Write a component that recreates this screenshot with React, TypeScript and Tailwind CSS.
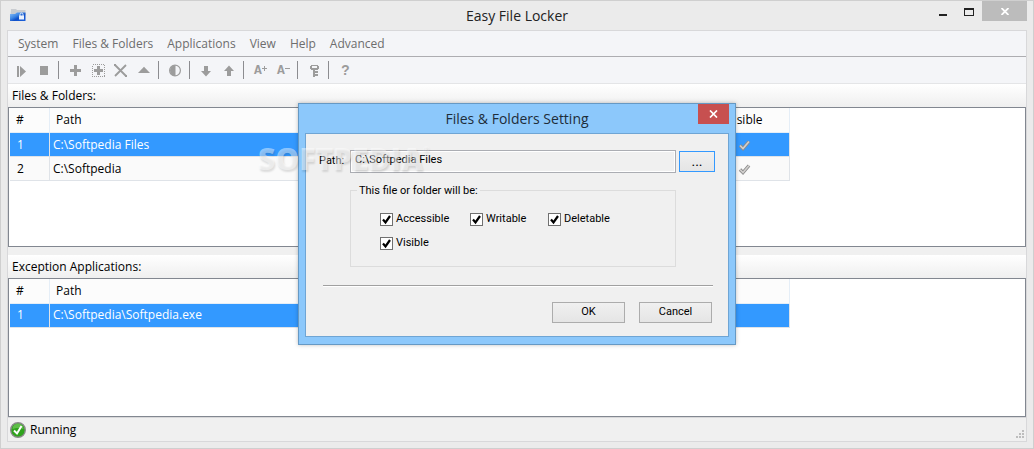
import type { ReactNode } from "react";

const MENUS = ["System", "Files & Folders", "Applications", "View", "Help", "Advanced"];

function FolderIcon() {
  return (
    <svg width="16" height="13" viewBox="0 0 16 13" aria-hidden="true">
      <defs>
        <linearGradient id="folder" x1="0" y1="0" x2="1" y2="1">
          <stop offset="0" stopColor="#8fc2f8" />
          <stop offset="0.4" stopColor="#3d86e4" />
          <stop offset="0.6" stopColor="#0f4fc8" />
          <stop offset="1" stopColor="#1c62dc" />
        </linearGradient>
      </defs>
      <path d="M1 0h5l1 1h8.500v5H.5z" fill="#c9ccd0" />
      <path d="M0 5h5l2-1.500h8.500v8.500H0z" fill="url(#folder)" />
      <path d="M10 7V5.500a1.500 1.500 0 0 1 3 0V7" fill="none" stroke="#dfeafc" />
      <rect x="9" y="6.500" width="5" height="4" fill="#eaf1fd" />
    </svg>
  );
}

function ToolButton({ label, children }: { label: string; children: ReactNode }) {
  return (
    <button type="button" aria-label={label} className="flex h-[26px] w-[23px] items-center justify-center text-[#9c9c9c]">
      {children}
    </button>
  );
}

function Glyph({ children, smooth = false }: { children: ReactNode; smooth?: boolean }) {
  return (
    <svg width="23" height="26" viewBox="0 0 23 26" fill="currentColor" shapeRendering={smooth ? "auto" : "crispEdges"} aria-hidden="true">
      {children}
    </svg>
  );
}

function Separator() {
  return <div className="ml-[2px] mr-[5px] h-[18px] w-px bg-[#8c8c90]" />;
}

function Toolbar() {
  return (
    <div className="flex h-[27px] items-center border-b border-[#e4e5e7] bg-[#f4f5f8] pl-[2px]">
      <ToolButton label="Start">
        <Glyph smooth>
          <path d="M7 9h2v11H7zM10 9l6 5.500-6 5.500z" />
        </Glyph>
      </ToolButton>
      <ToolButton label="Stop">
        <Glyph>
          <path d="M7 9h8v9H7z" />
        </Glyph>
      </ToolButton>
      <Separator />
      <ToolButton label="Add">
        <Glyph>
          <path d="M6 12h11v3H6zM10 8h3v11h-3z" />
        </Glyph>
      </ToolButton>
      <ToolButton label="Add several">
        <Glyph>
          <path d="M7 12h9v3H7zM10 9h3v9h-3z" />
          <rect x="5.500" y="7.500" width="12" height="12" fill="none" stroke="currentColor" strokeDasharray="1 1" />
        </Glyph>
      </ToolButton>
      <ToolButton label="Remove">
        <Glyph smooth>
          <path d="M5 8l11 11M16 8L5 19" stroke="currentColor" strokeWidth="1.800" />
          <path d="M4 7h2v2H4zM15 18h2v2h-2z" />
        </Glyph>
      </ToolButton>
      <ToolButton label="Edit">
        <Glyph smooth>
          <path d="M5 16l6-6.200 6 6.200z" />
        </Glyph>
      </ToolButton>
      <Separator />
      <ToolButton label="Toggle">
        <Glyph smooth>
          <circle cx="11" cy="13.500" r="5.400" fill="none" stroke="currentColor" strokeWidth="1.200" />
          <path d="M11.500 8v11a5.500 5.500 0 0 1 0-11z" />
        </Glyph>
      </ToolButton>
      <Separator />
      <ToolButton label="Move down">
        <Glyph smooth>
          <path d="M9 9h4v5h3l-5 5.500L6 14h3z" />
        </Glyph>
      </ToolButton>
      <ToolButton label="Move up">
        <Glyph smooth>
          <path d="M9 19h4v-5h3l-5-5.500L6 14h3z" />
        </Glyph>
      </ToolButton>
      <Separator />
      <ToolButton label="Larger text">
        <span className="pt-[2px] font-['Liberation_Mono',monospace] text-[13px] leading-3 font-bold">A</span>
        <svg width="5" height="5" viewBox="0 0 5 5" className="mb-1" fill="currentColor" aria-hidden="true">
          <path d="M2 0h1v2h2v1H3v2H2V3H0V2h2z" />
        </svg>
      </ToolButton>
      <ToolButton label="Smaller text">
        <span className="pt-[2px] font-['Liberation_Mono',monospace] text-[13px] leading-3 font-bold">A</span>
        <svg width="5" height="5" viewBox="0 0 5 5" className="mb-1" fill="currentColor" aria-hidden="true">
          <path d="M0 2h5v1H0z" />
        </svg>
      </ToolButton>
      <Separator />
      <ToolButton label="Password">
        <Glyph>
          <path fillRule="evenodd" d="M8 8h7v1h1v3h-1v1H8v-1H7V9h1zM9 9v2h5V9z" />
          <path d="M10 12h2v8h-2zM12 14h3v2h-3zM12 17h3v2h-3z" />
        </Glyph>
      </ToolButton>
      <Separator />
      <ToolButton label="Help">
        <span className="pt-px font-['Liberation_Mono',monospace] text-sm leading-4 font-bold">?</span>
      </ToolButton>
    </div>
  );
}

function RowTick() {
  return (
    <svg width="13" height="12" viewBox="0 0 13 12" className="mx-auto" role="img" aria-label="Yes">
      <path d="M2 6.500l3 3L11 2.500" fill="none" stroke="#8b8b8b" strokeWidth="3.400" />
      <path d="M2 6.500l3 3L11 2.500" fill="none" stroke="#d2d0ce" strokeWidth="1.600" />
    </svg>
  );
}

type Row = { path: string; visible?: boolean; selected?: boolean };

function FileList({ title, rows, lastHeading }: { title: string; rows: Row[]; lastHeading: string }) {
  return (
    <section className="flex grow basis-0 flex-col">
      <h2 className="h-[23px] bg-linear-to-b from-white to-[#efefef] pl-1 text-xs leading-[23px]">{title}</h2>
      <div className="flex-1 border border-[#828790] bg-white pr-[235px] pl-px">
        <table className="w-full table-fixed border-separate border-spacing-0 text-left text-xs">
          <colgroup>
            <col className="w-[40px]" />
            <col />
            <col className="w-[90px]" />
          </colgroup>
          <thead>
            <tr className="h-[25px] bg-[#fcfcfc]">
              <th className="border-r border-b border-[#e5eef7] pl-[6px] font-normal">#</th>
              <th className="border-b border-[#e5eef7] pl-[6px] font-normal">Path</th>
              <th className="border-r border-b border-[#e5eef7] text-center font-normal">{lastHeading}</th>
            </tr>
          </thead>
          <tbody>
            {rows.map((row, i) => (
              <tr key={row.path} className={row.selected ? "h-6 bg-[#3399ff] text-white" : "h-6 bg-[#fafafa]"}>
                <td className="border-r border-b border-[#dfe3e8] pl-[7px]">{i + 1}</td>
                <td className="border-b border-[#dfe3e8] pl-[3px]">{row.path}</td>
                <td className="border-r border-b border-[#dfe3e8]">{row.visible && <RowTick />}</td>
              </tr>
            ))}
          </tbody>
        </table>
      </div>
    </section>
  );
}

function Check({ label }: { label: string }) {
  return (
    <label className="flex h-[13px] items-center gap-[3px]">
      <span className="grid">
        <input type="checkbox" defaultChecked className="peer col-start-1 row-start-1 size-[13px] appearance-none border border-[#707070] bg-white" />
        <svg width="13" height="13" viewBox="0 0 13 13" className="pointer-events-none invisible col-start-1 row-start-1 peer-checked:visible" aria-hidden="true">
          <path d="M3 6.500l2.500 3L10 3" fill="none" stroke="#000" strokeWidth="2.200" />
        </svg>
      </span>
      {label}
    </label>
  );
}

function SettingsDialog() {
  return (
    <div
      role="dialog"
      aria-labelledby="dialog-title"
      className="relative flex w-[438px] flex-col border border-[#6699c4] bg-[#8cc8fb] px-[6px] pb-[7px] shadow-[0_0_4px_rgba(0,0,0,0.25)]"
    >
      <header className="grid h-[29px] grid-cols-[31px_1fr_31px] items-start">
        <h1 id="dialog-title" className="col-start-2 text-center text-sm leading-[29px] text-[#1e2d3a]">
          Files &amp; Folders Setting
        </h1>
        <button type="button" aria-label="Close dialog" className="flex h-5 w-[31px] items-center justify-center bg-[#c75050] text-white">
          <svg width="9" height="8" viewBox="0 0 9 8" aria-hidden="true">
            <path d="M1 0.500l7 7M8 0.500l-7 7" stroke="currentColor" strokeWidth="1.700" />
          </svg>
        </button>
      </header>
      <form className="border border-[#6fa5d4] bg-[#f0f0f0] px-[13px] pt-4 pb-[13px] font-['Roboto',sans-serif] text-[11px]">
        <div className="flex items-center">
          <label htmlFor="path" className="w-[31px]">
            Path:
          </label>
          <input
            id="path"
            readOnly
            defaultValue="C:\Softpedia Files"
            className="h-[23px] min-w-0 flex-1 border border-[#abadb3] bg-[#f0f0f0] px-1 pb-1 shadow-[inset_0_0_0_1px_#fff]"
          />
          <button type="button" className="ml-[3px] h-[21px] w-9 border border-[#3399ff] bg-linear-to-b from-[#f0f0f0] to-[#e5e5e5] text-sm leading-4">
            ...
          </button>
        </div>
        <fieldset className="mt-[10px] mr-[39px] ml-[31px] h-[84px] border border-[#dcdcdc] pl-[29px]">
          <legend className="-ml-[23px] h-4 px-[2px] leading-4">This file or folder will be:</legend>
          <div className="grid grid-cols-[90px_78px_1fr] gap-y-[11px] pt-[14px]">
            <Check label="Accessible" />
            <Check label="Writable" />
            <Check label="Deletable" />
            <Check label="Visible" />
          </div>
        </fieldset>
        <hr className="mt-[18px] mr-[2px] ml-1 border-t border-b border-t-[#a0a0a0] border-b-white" />
        <div className="mt-[15px] flex justify-end gap-[14px] pr-[3px]">
          <button type="submit" className="h-[21px] w-[73px] border border-[#acacac] bg-linear-to-b from-[#f0f0f0] to-[#e5e5e5]">
            OK
          </button>
          <button type="button" className="h-[21px] w-[73px] border border-[#acacac] bg-linear-to-b from-[#f0f0f0] to-[#e5e5e5]">
            Cancel
          </button>
        </div>
      </form>
    </div>
  );
}

export default function App() {
  return (
    <div className="relative flex min-h-screen flex-col border border-[#cfcfcf] bg-[#ebebeb] px-[6px] pb-[6px] font-['Open_Sans','Noto_Sans',sans-serif] text-black">
      <header className="grid h-[29px] grid-cols-[1fr_auto_1fr] items-start">
        <div className="pt-2 pl-[3px]">
          <FolderIcon />
        </div>
        <h1 className="text-sm leading-[29px] text-[#222]">Easy File Locker</h1>
        <div className="flex justify-end">
          <button type="button" aria-label="Minimize" className="flex h-[21px] w-[26px] items-center justify-center">
            <svg width="8" height="8" viewBox="0 0 8 8" aria-hidden="true">
              <path d="M0 6h8v2H0z" fill="#222" />
            </svg>
          </button>
          <button type="button" aria-label="Maximize" className="flex h-[21px] w-[26px] items-center justify-center">
            <svg width="10" height="8" viewBox="0 0 10 8" shapeRendering="crispEdges" aria-hidden="true">
              <path fillRule="evenodd" d="M0 0h10v8H0zM1 2v5h8V2z" fill="#222" />
            </svg>
          </button>
          <button type="button" aria-label="Close" className="flex h-5 w-[45px] items-center justify-center bg-[#bcbcbc]">
            <svg width="8" height="7" viewBox="0 0 8 7" aria-hidden="true">
              <path d="M.5 0l7 7M7.500 0l-7 7" stroke="#fff" strokeWidth="1.800" />
            </svg>
          </button>
        </div>
      </header>

      <main className="flex flex-1 flex-col border border-[#d8d8da] bg-[#f0f0f0]">
        <nav className="flex h-[26px] items-center gap-[14px] border-b border-[#adadb1] bg-[#f4f5f8] pt-px pl-[10px] text-xs text-[#6d6d6d]">
          {MENUS.map((menu) => (
            <button key={menu} type="button">
              {menu}
            </button>
          ))}
        </nav>
        <Toolbar />
        <div className="flex flex-1 flex-col gap-2">
          <FileList
            title="Files & Folders:"
            lastHeading="Visible"
            rows={[
              { path: "C:\\Softpedia Files", visible: true, selected: true },
              { path: "C:\\Softpedia", visible: true },
            ]}
          />
          <FileList title="Exception Applications:" lastHeading="" rows={[{ path: "C:\\Softpedia\\Softpedia.exe", selected: true }]} />
        </div>
        <footer className="flex h-6 items-center justify-between border-t border-[#d8d8da] pl-[2px] text-xs">
          <span className="flex items-center gap-1">
            <svg width="16" height="16" viewBox="0 0 16 16" aria-hidden="true">
              <circle cx="8" cy="8" r="7.300" fill="#2fa31c" stroke="#8a8a8a" strokeWidth="1.400" />
              <path d="M2.500 7a5.500 5.500 0 0 1 11 0c-3-1.500-8-1.500-11 0z" fill="#7ed066" opacity="0.6" />
              <path d="M4 8.500l3 3L11.500 4" fill="none" stroke="#fff" strokeWidth="2" />
            </svg>
            Running
          </span>
          <svg width="8" height="8" viewBox="0 0 8 8" className="mt-2 mr-[2px]" fill="#bdbdbd" aria-hidden="true">
            <path d="M6 0h2v2H6zM3 3h2v2H3zM6 3h2v2H6zM0 6h2v2H0zM3 6h2v2H3zM6 6h2v2H6z" />
          </svg>
        </footer>
      </main>

      <div className="absolute inset-0 flex items-center justify-center pb-[2px]">
        <div className="relative">
          <SettingsDialog />
          <div className="pointer-events-none absolute top-10 -left-10 flex items-start font-['Open_Sans',sans-serif] text-white/45 [text-shadow:1px_2px_2px_rgba(0,0,0,0.12)]">
            <span className="text-[30px] leading-8 font-extrabold">SOFTPEDIA</span>
            <span className="text-[8px] leading-3">®</span>
          </div>
        </div>
      </div>
    </div>
  );
}
